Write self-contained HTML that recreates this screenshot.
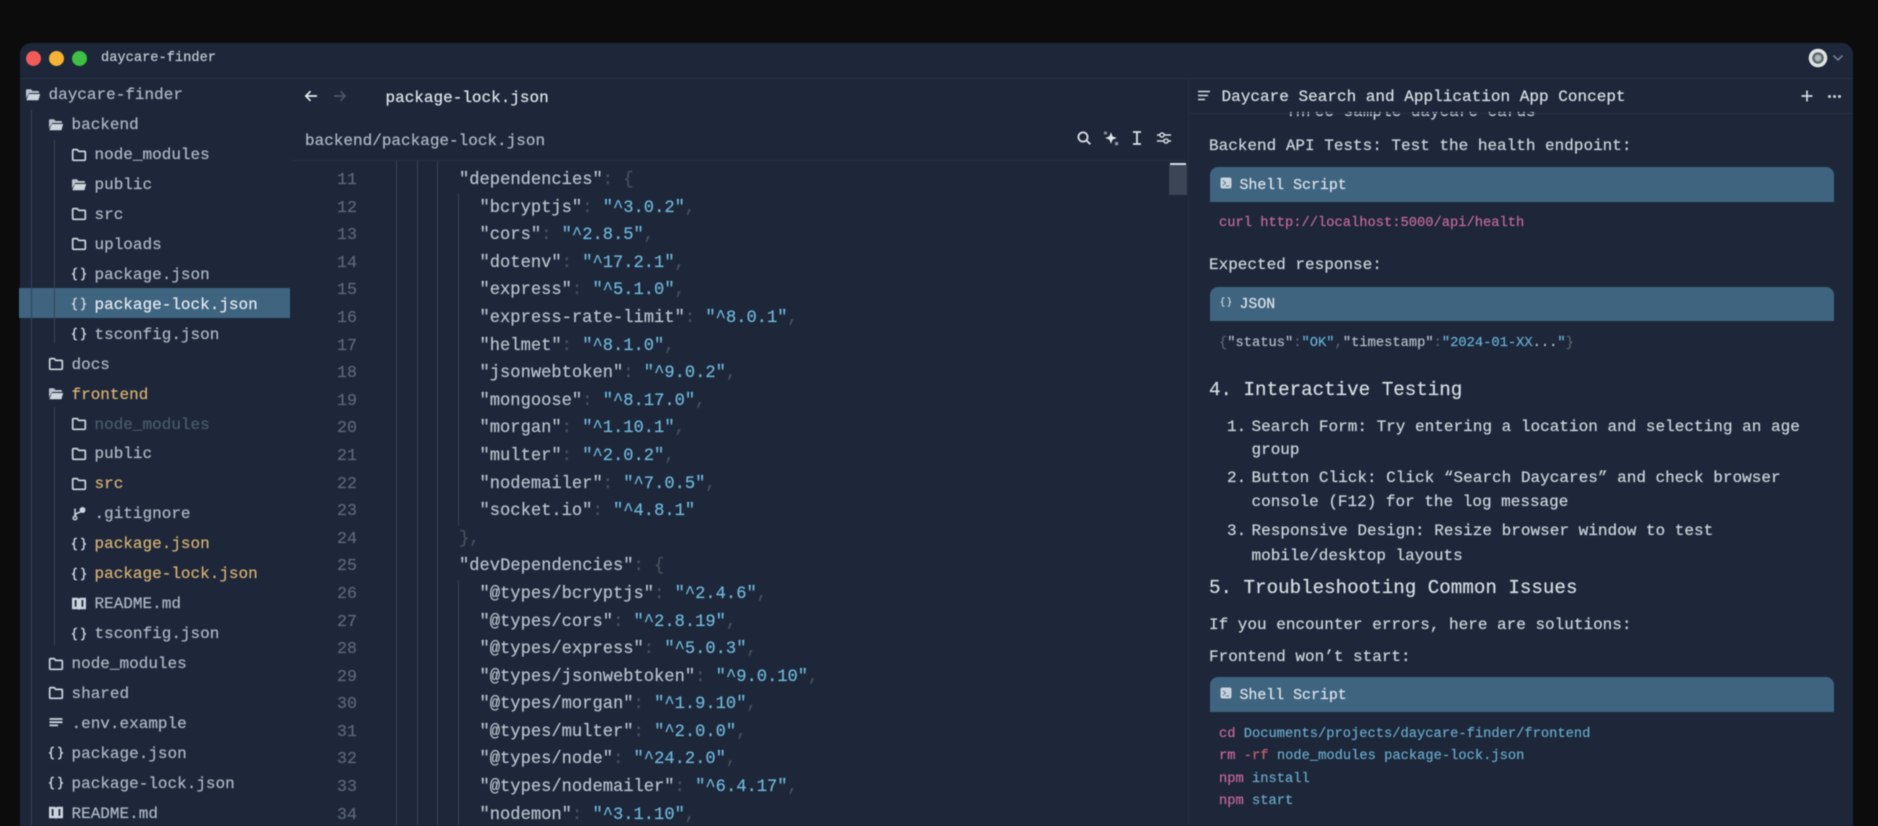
<!DOCTYPE html>
<html lang="en">
<head>
<meta charset="utf-8">
<title>daycare-finder</title>
<style>
html,body{margin:0;padding:0;width:1878px;height:826px;overflow:hidden;background:#0c0c0c}
*{box-sizing:border-box}
body{font-family:"Liberation Mono","DejaVu Sans Mono",monospace;font-size:16px;color:#ccd4dc;-webkit-text-stroke:.2px currentColor}
#win{position:absolute;left:20px;top:43px;width:1833px;height:800px;background:#1d2739;border-radius:11px 11px 0 0}
#stage{position:absolute;left:0;top:0;width:1878px;height:826px;overflow:hidden;filter:blur(.45px)}
.a{position:absolute;white-space:pre}
.ln{position:absolute;background:#364355;width:1px}
#tree{position:absolute;left:0;top:81.2px;width:290px}
.r{height:29.94px;line-height:29.94px;white-space:pre;position:relative;color:#adb8c5}
.r svg{position:absolute;top:5.5px;width:16px;height:16px;color:#ccd4de}
.d0{padding-left:48.5px}.d0 svg{left:25px}
.d1{padding-left:71.5px}.d1 svg{left:48px}
.d2{padding-left:94.5px}.d2 svg{left:71px}
.y{color:#d8b072}.g{color:#4a5c6d}.w{color:#e4eaf0}
#code{position:absolute;left:0;top:167px;width:1168px;font-size:17.13px}
.l{height:27.6px;line-height:27.6px;white-space:pre;position:relative;padding-left:459px;color:#b7c2cd}
.l em{position:absolute;left:337px;font-style:normal;color:#5b6878;font-size:16.67px}
.l.i{padding-left:479.5px}
.l b{font-weight:normal;color:#6fb6d8}
.l u{text-decoration:none;color:#46535f}
.hd{position:absolute;left:1210px;width:624px;background:#3f6480;border-radius:8px 8px 0 0}
.sm{font-size:13.76px;line-height:20px;height:20px}
.p{color:#c6689b}.bl{color:#68a8c9}.rd{color:#c4616f}.dm{color:#56626f}.kk{color:#b2bdc8}.st{color:#67b0d2}
</style>
</head>
<body>
<svg width="0" height="0" style="position:absolute">
<defs>
<symbol id="fo" viewBox="0 0 16 16"><path d="M1 3.2Q1 2.3 2 2.3H6L7.5 4H13Q14 4 14 5V6H4.2L1 11.5Z" fill="currentColor" opacity=".9"/><path d="M3.9 7H15.2L13.4 13.2H1.3Z" fill="currentColor"/></symbol>
<symbol id="fc" viewBox="0 0 16 16"><path d="M1.7 3.6Q1.7 2.6 2.7 2.6H6.2L7.7 4.4H13.3Q14.3 4.4 14.3 5.4V12.3Q14.3 13.3 13.3 13.3H2.7Q1.7 13.3 1.7 12.3Z" fill="none" stroke="currentColor" stroke-width="1.7"/></symbol>
<symbol id="br" viewBox="0 0 16 16"><path d="M5.8 2.2Q3.2 2.2 3.2 4.5V6.3Q3.2 7.8 1.2 8Q3.2 8.2 3.2 9.7V11.5Q3.2 13.8 5.8 13.8M10.2 2.2Q12.8 2.2 12.8 4.5V6.3Q12.8 7.8 14.8 8Q12.8 8.2 12.8 9.7V11.5Q12.8 13.8 10.2 13.8" fill="none" stroke="currentColor" stroke-width="1.5"/></symbol>
<symbol id="bk" viewBox="0 0 16 16"><path d="M1 1.8H6.5Q8 1.8 8 3.3V14.5Q8 13.3 6.5 13.3H1ZM15 1.8H9.5Q8 1.8 8 3.3V14.5Q8 13.3 9.5 13.3H15Z" fill="currentColor"/><path d="M4.6 4V10.8M11.4 4V10.8" stroke="#1d2739" stroke-width="1.8"/></symbol>
<symbol id="gt" viewBox="0 0 16 16"><circle cx="11.5" cy="4" r="3" fill="currentColor"/><circle cx="4" cy="12" r="1.8" fill="none" stroke="currentColor" stroke-width="1.5"/><path d="M4 10V2.5M4 10Q4 7.5 9.5 6" fill="none" stroke="currentColor" stroke-width="1.5"/></symbol>
<symbol id="tx" viewBox="0 0 16 16"><path d="M1.5 4H14.5M1.5 7.2H14.5M1.5 10.4H10" stroke="currentColor" stroke-width="1.8"/></symbol>
</defs>
</svg>

<div id="stage">
<div id="win"></div>

<!-- title bar -->
<div class="a" style="left:25.5px;top:50.5px;width:15px;height:15px;border-radius:50%;background:#f25c58"></div>
<div class="a" style="left:48.5px;top:50.5px;width:15px;height:15px;border-radius:50%;background:#f5b335"></div>
<div class="a" style="left:71.5px;top:50.5px;width:15px;height:15px;border-radius:50%;background:#3fbf44"></div>
<div class="a" style="left:101px;top:49px;line-height:20px;font-size:13.7px;color:#c3ccd6">daycare-finder</div>
<div class="a" style="left:20px;top:78px;width:1833px;height:1px;background:#253145"></div>
<svg class="a" style="left:1808px;top:48px" width="20" height="20" viewBox="0 0 20 20"><circle cx="10" cy="10" r="9.3" fill="#dfe3e3"/><circle cx="10" cy="10" r="5.8" fill="#5d686c"/><circle cx="10" cy="10" r="3.4" fill="#aeb6b8"/></svg>
<svg class="a" style="left:1832px;top:53px" width="12" height="10" viewBox="0 0 12 10"><path d="M1.5 2.5L6 7L10.5 2.5" fill="none" stroke="#7d8896" stroke-width="1.5"/></svg>

<!-- sidebar -->
<div class="a" style="left:19px;top:288px;width:271px;height:30px;background:#3f6480"></div>
<div class="ln" style="left:31px;top:110px;height:716px"></div>
<div class="ln" style="left:54px;top:140px;height:203px"></div>
<div class="ln" style="left:54px;top:407px;height:238px"></div>
<div id="tree">
<div class="r d0"><svg><use href="#fo"/></svg>daycare-finder</div>
<div class="r d1"><svg><use href="#fo"/></svg>backend</div>
<div class="r d2"><svg><use href="#fc"/></svg>node_modules</div>
<div class="r d2"><svg><use href="#fo"/></svg>public</div>
<div class="r d2"><svg><use href="#fc"/></svg>src</div>
<div class="r d2"><svg><use href="#fc"/></svg>uploads</div>
<div class="r d2"><svg><use href="#br"/></svg>package.json</div>
<div class="r d2 w"><svg><use href="#br"/></svg>package-lock.json</div>
<div class="r d2"><svg><use href="#br"/></svg>tsconfig.json</div>
<div class="r d1"><svg><use href="#fc"/></svg>docs</div>
<div class="r d1 y"><svg><use href="#fo"/></svg>frontend</div>
<div class="r d2 g"><svg><use href="#fc"/></svg>node_modules</div>
<div class="r d2"><svg><use href="#fc"/></svg>public</div>
<div class="r d2 y"><svg><use href="#fc"/></svg>src</div>
<div class="r d2"><svg><use href="#gt"/></svg>.gitignore</div>
<div class="r d2 y"><svg><use href="#br"/></svg>package.json</div>
<div class="r d2 y"><svg><use href="#br"/></svg>package-lock.json</div>
<div class="r d2"><svg><use href="#bk"/></svg>README.md</div>
<div class="r d2"><svg><use href="#br"/></svg>tsconfig.json</div>
<div class="r d1"><svg><use href="#fc"/></svg>node_modules</div>
<div class="r d1"><svg><use href="#fc"/></svg>shared</div>
<div class="r d1"><svg><use href="#tx"/></svg>.env.example</div>
<div class="r d1"><svg><use href="#br"/></svg>package.json</div>
<div class="r d1"><svg><use href="#br"/></svg>package-lock.json</div>
<div class="r d1"><svg><use href="#bk"/></svg>README.md</div>
</div>

<!-- editor header -->
<svg class="a" style="left:303px;top:88px" width="16" height="16" viewBox="0 0 16 16"><path d="M14 8H3M7.5 3.2L2.8 8L7.5 12.8" fill="none" stroke="#e6ebf0" stroke-width="1.7"/></svg>
<svg class="a" style="left:332px;top:88px" width="16" height="16" viewBox="0 0 16 16"><path d="M2 8H13M8.5 3.2L13.2 8L8.5 12.8" fill="none" stroke="#4a5767" stroke-width="1.7"/></svg>
<div class="a" style="left:385.5px;top:88px;line-height:20px;color:#dfe5eb">package-lock.json</div>
<div class="a" style="left:305px;top:130.5px;line-height:20px;color:#aeb8c4">backend/package-lock.json</div>
<div class="a" style="left:291px;top:160px;width:897px;height:1px;background:#243043"></div>
<div class="a" style="left:1188px;top:78px;width:1px;height:748px;background:#232e41"></div>

<svg class="a" style="left:1076px;top:130px" width="16" height="16" viewBox="0 0 16 16"><circle cx="7" cy="7" r="4.6" fill="none" stroke="#dbe1e7" stroke-width="1.8"/><path d="M10.5 10.5L14.3 14.3" stroke="#dbe1e7" stroke-width="1.8"/></svg>
<svg class="a" style="left:1103px;top:130px" width="16" height="16" viewBox="0 0 16 16"><path d="M8 2.2L9.6 6.4L13.8 8L9.6 9.6L8 13.8L6.4 9.6L2.2 8L6.4 6.4Z" fill="#e0e5ea"/><rect x="1" y="1.5" width="3" height="3" fill="#7c8796"/><rect x="12" y="12" width="3.2" height="3.2" fill="#8b95a3"/></svg>
<svg class="a" style="left:1129px;top:130px" width="16" height="16" viewBox="0 0 16 16"><path d="M4 2H12M4 14H12M8 2V14" fill="none" stroke="#dbe1e7" stroke-width="1.8"/></svg>
<svg class="a" style="left:1156px;top:130px" width="16" height="16" viewBox="0 0 16 16"><path d="M1 5H15M1 11H15" stroke="#dbe1e7" stroke-width="1.5"/><circle cx="6" cy="5" r="2.1" fill="#1d2739" stroke="#dbe1e7" stroke-width="1.4"/><circle cx="10" cy="11" r="2.1" fill="#1d2739" stroke="#dbe1e7" stroke-width="1.4"/></svg>

<!-- scrollbar -->
<div class="a" style="left:1170px;top:163px;width:16px;height:2px;background:#d8dee4"></div>
<div class="a" style="left:1169px;top:165px;width:18px;height:30px;background:#3b4556"></div>

<!-- guides -->
<div class="ln" style="left:396px;top:161px;height:665px"></div>
<div class="ln" style="left:417px;top:161px;height:665px"></div>
<div class="ln" style="left:437px;top:161px;height:665px"></div>
<div class="ln" style="left:458px;top:193px;height:333px"></div>
<div class="ln" style="left:458px;top:580px;height:246px"></div>

<!-- code -->
<div id="code">
<div class="l"><em>11</em>"dependencies"<u>: {</u></div>
<div class="l i"><em>12</em>"bcryptjs"<u>: </u><b>"^3.0.2"</b><u>,</u></div>
<div class="l i"><em>13</em>"cors"<u>: </u><b>"^2.8.5"</b><u>,</u></div>
<div class="l i"><em>14</em>"dotenv"<u>: </u><b>"^17.2.1"</b><u>,</u></div>
<div class="l i"><em>15</em>"express"<u>: </u><b>"^5.1.0"</b><u>,</u></div>
<div class="l i"><em>16</em>"express-rate-limit"<u>: </u><b>"^8.0.1"</b><u>,</u></div>
<div class="l i"><em>17</em>"helmet"<u>: </u><b>"^8.1.0"</b><u>,</u></div>
<div class="l i"><em>18</em>"jsonwebtoken"<u>: </u><b>"^9.0.2"</b><u>,</u></div>
<div class="l i"><em>19</em>"mongoose"<u>: </u><b>"^8.17.0"</b><u>,</u></div>
<div class="l i"><em>20</em>"morgan"<u>: </u><b>"^1.10.1"</b><u>,</u></div>
<div class="l i"><em>21</em>"multer"<u>: </u><b>"^2.0.2"</b><u>,</u></div>
<div class="l i"><em>22</em>"nodemailer"<u>: </u><b>"^7.0.5"</b><u>,</u></div>
<div class="l i"><em>23</em>"socket.io"<u>: </u><b>"^4.8.1"</b></div>
<div class="l"><em>24</em><u>},</u></div>
<div class="l"><em>25</em>"devDependencies"<u>: {</u></div>
<div class="l i"><em>26</em>"@types/bcryptjs"<u>: </u><b>"^2.4.6"</b><u>,</u></div>
<div class="l i"><em>27</em>"@types/cors"<u>: </u><b>"^2.8.19"</b><u>,</u></div>
<div class="l i"><em>28</em>"@types/express"<u>: </u><b>"^5.0.3"</b><u>,</u></div>
<div class="l i"><em>29</em>"@types/jsonwebtoken"<u>: </u><b>"^9.0.10"</b><u>,</u></div>
<div class="l i"><em>30</em>"@types/morgan"<u>: </u><b>"^1.9.10"</b><u>,</u></div>
<div class="l i"><em>31</em>"@types/multer"<u>: </u><b>"^2.0.0"</b><u>,</u></div>
<div class="l i"><em>32</em>"@types/node"<u>: </u><b>"^24.2.0"</b><u>,</u></div>
<div class="l i"><em>33</em>"@types/nodemailer"<u>: </u><b>"^6.4.17"</b><u>,</u></div>
<div class="l i"><em>34</em>"nodemon"<u>: </u><b>"^3.1.10"</b><u>,</u></div>
</div>

<!-- right panel body clipped line (sits under header) -->
<div class="a" style="left:1286px;top:112px;height:8px;width:260px;overflow:hidden"><div class="a" style="left:0;top:-10.5px;line-height:20px;color:#c9d1da">Three sample daycare cards</div></div>

<!-- right panel header -->
<svg class="a" style="left:1197px;top:89px" width="14" height="14" viewBox="0 0 14 14"><path d="M1 2.5H13M1 6.5H11M1 10.5H8" stroke="#d5dbe2" stroke-width="1.6"/></svg>
<div class="a" style="left:1221.5px;top:87px;line-height:20px;font-size:16.05px;color:#d8dee5">Daycare Search and Application App Concept</div>
<svg class="a" style="left:1800px;top:89px" width="14" height="14" viewBox="0 0 14 14"><path d="M7 1.5V12.5M1.5 7H12.5" stroke="#d5dbe2" stroke-width="1.7"/></svg>
<div class="a" style="left:1828px;top:94.5px;width:3px;height:3px;border-radius:50%;background:#c9d0d8;box-shadow:5px 0 0 #c9d0d8,10px 0 0 #c9d0d8"></div>
<div class="a" style="left:1189px;top:113px;width:664px;height:1px;background:#253145"></div>

<!-- right panel body -->
<div class="a" style="left:1209px;top:136px;line-height:20px">Backend API Tests: Test the health endpoint:</div>
<div class="hd" style="top:167px;height:35px"></div>
<svg class="a" style="left:1220px;top:177px" width="12" height="12" viewBox="0 0 12 12"><rect x=".5" y=".5" width="11" height="11" rx="2" fill="#c8d2dc"/><path d="M3 3.5L5.5 6L3 8.5M6 9H9" fill="none" stroke="#56748c" stroke-width="1"/></svg>
<div class="a" style="left:1239.5px;top:176px;line-height:20px;font-size:14.9px;color:#dbe2e8">Shell Script</div>
<div class="a sm" style="left:1219px;top:214px"><span class="p">curl http://localhost:5000/api/health</span></div>

<div class="a" style="left:1209px;top:255px;line-height:20px">Expected response:</div>
<div class="hd" style="top:287px;height:34px"></div>
<svg class="a" style="left:1220px;top:296px" width="12" height="12" viewBox="0 0 16 16"><use href="#br" style="color:#c8d2dc"/></svg>
<div class="a" style="left:1239.5px;top:295px;line-height:20px;font-size:14.9px;color:#dbe2e8">JSON</div>
<div class="a sm" style="left:1219px;top:334px"><span class="dm">{</span><span class="kk">"status"</span><span class="dm">:</span><span class="st">"OK"</span><span class="dm">,</span><span class="kk">"timestamp"</span><span class="dm">:</span><span class="st">"2024-01-XX</span><span class="kk">...</span><span class="st">"</span><span class="dm">}</span></div>

<div class="a" style="left:1209px;top:378px;line-height:24px;font-size:19.2px;color:#d6dde4">4. Interactive Testing</div>
<div class="a" style="left:1227px;top:417px;line-height:20px">1.</div>
<div class="a" style="left:1251.5px;top:417px;line-height:20px;font-size:16.05px">Search Form: Try entering a location and selecting an age</div>
<div class="a" style="left:1251.5px;top:440px;line-height:20px">group</div>
<div class="a" style="left:1227px;top:468px;line-height:20px">2.</div>
<div class="a" style="left:1251.5px;top:468px;line-height:20px;font-size:16.05px">Button Click: Click “Search Daycares” and check browser</div>
<div class="a" style="left:1251.5px;top:492px;line-height:20px">console (F12) for the log message</div>
<div class="a" style="left:1227px;top:521px;line-height:20px">3.</div>
<div class="a" style="left:1251.5px;top:521px;line-height:20px;font-size:16.05px">Responsive Design: Resize browser window to test</div>
<div class="a" style="left:1251.5px;top:546px;line-height:20px">mobile/desktop layouts</div>
<div class="a" style="left:1209px;top:576px;line-height:24px;font-size:19.2px;color:#d6dde4">5. Troubleshooting Common Issues</div>
<div class="a" style="left:1209px;top:615px;line-height:20px">If you encounter errors, here are solutions:</div>
<div class="a" style="left:1209px;top:647px;line-height:20px">Frontend won’t start:</div>
<div class="hd" style="top:677px;height:35px"></div>
<svg class="a" style="left:1220px;top:687px" width="12" height="12" viewBox="0 0 12 12"><rect x=".5" y=".5" width="11" height="11" rx="2" fill="#c8d2dc"/><path d="M3 3.5L5.5 6L3 8.5M6 9H9" fill="none" stroke="#56748c" stroke-width="1"/></svg>
<div class="a" style="left:1239.5px;top:686px;line-height:20px;font-size:14.9px;color:#dbe2e8">Shell Script</div>
<div class="a sm" style="left:1219px;top:725px"><span class="p">cd</span> <span class="bl">Documents/projects/daycare-finder/frontend</span></div>
<div class="a sm" style="left:1219px;top:747px"><span class="p">rm</span> <span class="rd">-rf</span> <span class="bl">node_modules package-lock.json</span></div>
<div class="a sm" style="left:1219px;top:770px"><span class="p">npm</span> <span class="bl">install</span></div>
<div class="a sm" style="left:1219px;top:792px"><span class="p">npm</span> <span class="bl">start</span></div>
</div>
</body>
</html>
